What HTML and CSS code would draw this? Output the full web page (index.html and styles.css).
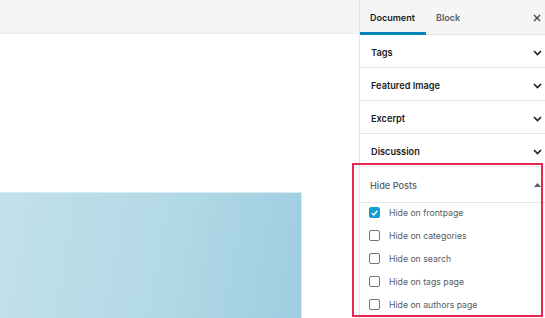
FILE: index.html
```html
<!DOCTYPE html>
<html>
<head>
<meta charset="utf-8">
<link rel="stylesheet" href="styles.css">
</head>
<body>
<div class="app">
  <div class="main">
    <div class="topbar"></div>
    <div class="canvas">
      <div class="cover"></div>
    </div>
  </div>
  <aside class="sidebar">
    <div class="tabs">
      <div class="tab active">Document</div>
      <div class="tab">Block</div>
      <div class="close">
        <svg width="8" height="8" viewBox="0 0 8 8"><path d="M1 1 L7 7 M7 1 L1 7" stroke="#40464d" stroke-width="1.4" fill="none"/></svg>
      </div>
    </div>
    <div class="panel"><span>Tags</span><svg class="chev" width="9" height="6" viewBox="0 0 9 6"><path d="M1 1 L4.5 4.5 L8 1" stroke="#191e23" stroke-width="1.6" fill="none"/></svg></div>
    <div class="panel"><span>Featured Image</span><svg class="chev" width="9" height="6" viewBox="0 0 9 6"><path d="M1 1 L4.5 4.5 L8 1" stroke="#191e23" stroke-width="1.6" fill="none"/></svg></div>
    <div class="panel"><span>Excerpt</span><svg class="chev" width="9" height="6" viewBox="0 0 9 6"><path d="M1 1 L4.5 4.5 L8 1" stroke="#191e23" stroke-width="1.6" fill="none"/></svg></div>
    <div class="panel"><span>Discussion</span><svg class="chev" width="9" height="6" viewBox="0 0 9 6"><path d="M1 1 L4.5 4.5 L8 1" stroke="#191e23" stroke-width="1.6" fill="none"/></svg></div>
    <div class="panel open"><span>Hide Posts</span><svg class="tri" width="7" height="4" viewBox="0 0 7 4"><path d="M0 4 L3.5 0 L7 4 Z" fill="#555d66"/></svg></div>
    <ul class="checks">
      <li><span class="box checked"><svg width="10" height="10" viewBox="0 0 10 10"><path d="M2 5.2 L4.2 7.3 L8.2 2.6" stroke="#fff" stroke-width="1.6" fill="none"/></svg></span>Hide on frontpage</li>
      <li><span class="box"></span>Hide on categories</li>
      <li><span class="box"></span>Hide on search</li>
      <li><span class="box"></span>Hide on tags page</li>
      <li><span class="box"></span>Hide on authors page</li>
    </ul>
  </aside>
  <div class="highlight"></div>
</div>
</body>
</html>
```

FILE: styles.css
```css
html, body {
  margin: 0;
  padding: 0;
  background: #fff;
}
body {
  width: 545px;
  height: 318px;
  overflow: hidden;
  font-family: Inter, "Noto Sans", sans-serif;
}
.app {
  position: relative;
  display: flex;
  width: 545px;
  height: 318px;
  overflow: hidden;
}
.main {
  width: 359px;
  display: flex;
  flex-direction: column;
  overflow: hidden;
}
.topbar {
  flex-shrink: 0;
  height: 33px;
  background: #f3f3f3;
  border-bottom: 1px solid #ebebeb;
}
.canvas {
  flex: 1;
  min-height: 0;
  padding-top: 158px;
  overflow: hidden;
}
.cover {
  width: 301px;
  height: 130px;
  background: linear-gradient(100deg, #c1e0ea 0%, #b4dae6 50%, #9ecde1 100%);
  border-top: 1px solid #d5ecf3;
  border-right: 1px solid #d5ecf3;
}
.sidebar {
  width: 185px;
  border-left: 1px solid #e2e4e7;
  display: flex;
  flex-direction: column;
}
.tabs {
  flex-shrink: 0;
  height: 34px;
  display: flex;
  align-items: stretch;
  background: #f5f5f5;
  border-bottom: 1px solid #e2e4e7;
}
.tab {
  display: flex;
  align-items: center;
  padding: 2px 10px 0;
  font-size: 9px;
  font-weight: 600;
  color: #555d66;
  border-bottom: 3px solid transparent;
  margin-bottom: -1px;
}
.tab.active {
  color: #191e23;
  border-bottom-color: #0085ba;
  width: 46px;
}
.close {
  margin-left: auto;
  display: flex;
  align-items: center;
  padding: 2px 4px 0 0;
}
.panel {
  flex-shrink: 0;
  height: 29px;
  display: flex;
  align-items: center;
  justify-content: space-between;
  padding: 3px 3px 0 11px;
  border-bottom: 1px solid #e2e4e7;
  font-size: 9.2px;
  font-weight: 600;
  color: #191e23;
}
.panel.open {
  height: 34px;
  margin-top: -1px;
  padding: 2px 4px 0 10px;
  color: #555d66;
  font-weight: 500;
}
.checks {
  list-style: none;
  margin: -2px 0 0;
  padding: 0 0 0 9px;
}
.checks li {
  height: 23px;
  display: flex;
  align-items: center;
  font-size: 8.7px;
  color: #555d66;
}
.box {
  width: 9px;
  height: 9px;
  border: 1.5px solid #6c7781;
  border-radius: 2px;
  margin-right: 9px;
  display: flex;
  align-items: center;
  justify-content: center;
}
.box.checked {
  background: #11a0d2;
  border-color: #11a0d2;
}
.highlight {
  position: absolute;
  left: 352px;
  top: 163px;
  width: 187px;
  height: 150px;
  border: 2px solid #e8284f;
}
```
